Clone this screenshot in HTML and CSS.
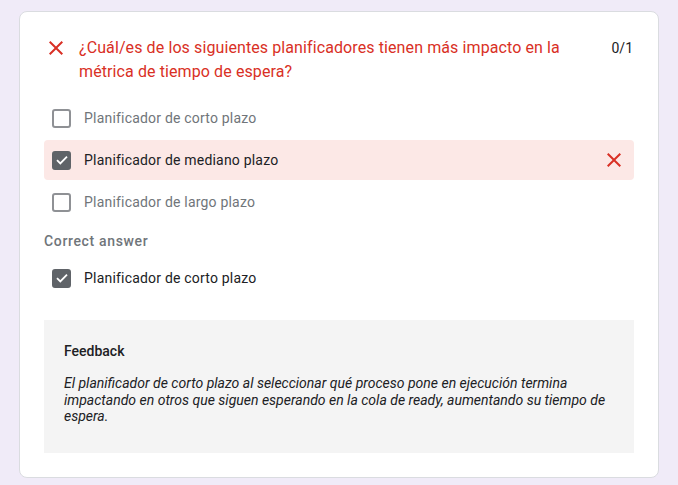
FILE: index.html
```html
<!DOCTYPE html>
<html lang="es">
<head>
<meta charset="utf-8">
<title>Pregunta</title>
<link rel="stylesheet" href="styles.css">
</head>
<body>
<div class="card">
  <div class="question">
    <svg class="qicon" viewBox="0 0 24 24" width="24" height="24"><path fill="#d93025" d="M19 6.41L17.59 5 12 10.59 6.41 5 5 6.41 10.59 12 5 17.59 6.41 19 12 13.41 17.59 19 19 17.59 13.41 12z"/></svg>
    <div class="qtext">¿Cuál/es de los siguientes planificadores tienen más impacto en la métrica de tiempo de espera?</div>
    <div class="score">0/1</div>
  </div>
  <div class="options">
    <div class="option">
      <span class="box"></span>
      <span class="label muted">Planificador de corto plazo</span>
    </div>
    <div class="option wrong">
      <span class="box checked"><svg viewBox="0 0 18 18" width="18" height="18"><path fill="none" stroke="#fff" stroke-width="1.8" d="M4 9.2l3.3 3.2 6.7-6.8"/></svg></span>
      <span class="label">Planificador de mediano plazo</span>
      <svg class="ricon" viewBox="0 0 24 24" width="24" height="24"><path fill="#d93025" d="M19 6.41L17.59 5 12 10.59 6.41 5 5 6.41 10.59 12 5 17.59 6.41 19 12 13.41 17.59 19 19 17.59 13.41 12z"/></svg>
    </div>
    <div class="option">
      <span class="box"></span>
      <span class="label muted">Planificador de largo plazo</span>
    </div>
  </div>
  <div class="correct-title">Correct answer</div>
  <div class="option correct-option">
    <span class="box checked"><svg viewBox="0 0 18 18" width="18" height="18"><path fill="none" stroke="#fff" stroke-width="1.8" d="M4 9.2l3.3 3.2 6.7-6.8"/></svg></span>
    <span class="label">Planificador de corto plazo</span>
  </div>
  <div class="feedback">
    <div class="fb-title">Feedback</div>
    <div class="fb-text">El planificador de corto plazo al seleccionar qué proceso pone en ejecución termina impactando en otros que siguen esperando en la cola de ready, aumentando su tiempo de espera.</div>
  </div>
</div>
</body>
</html>
```
FILE: styles.css
```css
html, body {
  margin: 0;
  padding: 0;
}
body {
  background: #f0ebf8;
  font-family: Roboto, "Liberation Sans", Arial, sans-serif;
  color: #202124;
  padding: 11px 19px 0 19px;
}
.card {
  width: 640px;
  height: 467px;
  box-sizing: border-box;
  background: #fff;
  border: 1px solid #dadce0;
  border-radius: 8px;
  padding: 24px;
}
.question {
  display: flex;
  align-items: flex-start;
}
.qicon {
  flex: none;
  margin-right: 11px;
}
.qtext {
  flex: 1;
  color: #d93025;
  font-size: 16px;
  line-height: 24px;
  letter-spacing: 0.1px;
  padding-right: 20px;
}
.score {
  flex: none;
  font-size: 14px;
  line-height: 24px;
  color: #202124;
  padding-right: 1px;
}
.options {
  margin-top: 14px;
  display: flex;
  flex-direction: column;
  gap: 2px;
}
.option {
  height: 40px;
  display: flex;
  align-items: center;
  padding: 0 8px 0 8px;
  border-radius: 4px;
}
.option.wrong {
  background: #fce8e6;
}
.correct-option {
  margin-top: 7px;
}
.box {
  flex: none;
  width: 19px;
  height: 19px;
  box-sizing: border-box;
  border: 2px solid #5f6368;
  border-radius: 3px;
  opacity: 0.7;
  display: flex;
  align-items: center;
  justify-content: center;
}
.box.checked {
  opacity: 1;
  background: #5f6368;
  border-color: #5f6368;
}
.box.checked svg {
  flex: none;
}
.label {
  margin-left: 13px;
  font-size: 14px;
  letter-spacing: 0.2px;
  color: #202124;
  flex: 1;
}
.label.muted {
  color: #70757a;
}
.ricon {
  flex: none;
}
.correct-title {
  margin-top: 9px;
  font-size: 14px;
  line-height: 20px;
  color: #70757a;
  font-weight: 500;
  letter-spacing: 0.65px;
}
.feedback {
  margin-top: 22px;
  background: #f4f4f4;
  height: 133px;
  box-sizing: border-box;
  padding: 21px 20px 20px 20px;
}
.fb-title {
  font-size: 14px;
  line-height: 20px;
  font-weight: 500;
  color: #202124;
}
.fb-text {
  margin-top: 14px;
  font-size: 14px;
  line-height: 16.5px;
  font-style: italic;
  color: #202124;
}
```
